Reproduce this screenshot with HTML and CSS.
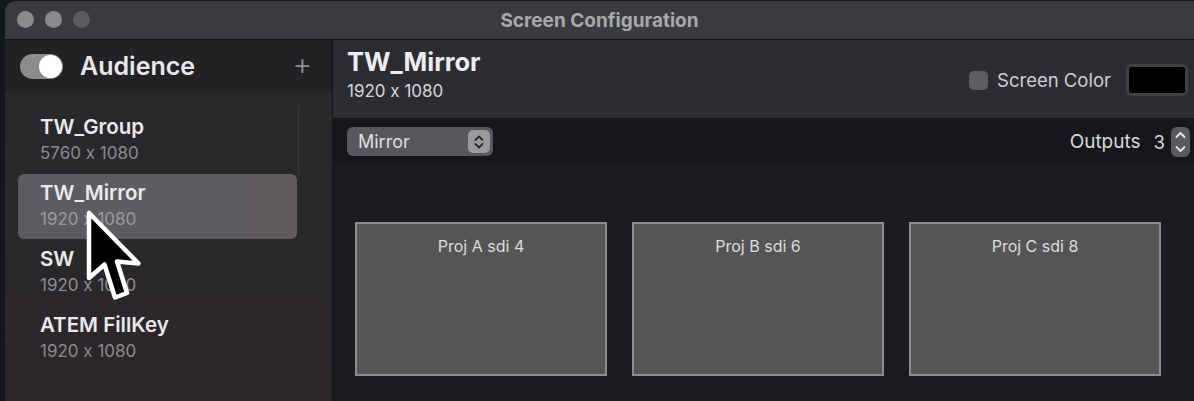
FILE: index.html
```html
<!DOCTYPE html>
<html>
<head>
<meta charset="utf-8">
<link rel="stylesheet" href="styles.css">
</head>
<body>
<div class="window">
  <div class="titlebar">
    <div class="lights">
      <span class="light"></span><span class="light"></span><span class="light dim"></span>
    </div>
    <div class="title">Screen Configuration</div>
  </div>
  <div class="body">
    <aside class="sidebar">
      <div class="side-head">
        <div class="toggle"><span class="knob"></span></div>
        <div class="aud">Audience</div>
        <div class="plus">+</div>
      </div>
      <div class="list">
        <div class="item"><div class="name">TW_Group</div><div class="res">5760 x 1080</div></div>
        <div class="item sel"><div class="name">TW_Mirror</div><div class="res">1920 x 1080</div></div>
        <div class="item"><div class="name">SW</div><div class="res">1920 x 1080</div></div>
        <div class="item"><div class="name">ATEM FillKey</div><div class="res">1920 x 1080</div></div>
      </div>
      <div class="scrollline"></div>
    </aside>
    <main class="main">
      <div class="main-head">
        <div class="heading">
          <div class="h-title">TW_Mirror</div>
          <div class="h-sub">1920 x 1080</div>
        </div>
        <div class="screen-color">
          <span class="check"></span>
          <span class="sc-label">Screen Color</span>
          <span class="well"><span class="well-in"></span></span>
        </div>
      </div>
      <div class="toolbar">
        <div class="popup">
          <span class="popup-label">Mirror</span>
          <span class="popup-arrows">
            <svg width="14" height="18" viewBox="0 0 14 18"><path d="M3.5 7 L7 3.5 L10.5 7 M3.5 11 L7 14.5 L10.5 11" fill="none" stroke="#2a2a2c" stroke-width="1.8" stroke-linecap="round" stroke-linejoin="round"/></svg>
          </span>
        </div>
        <div class="outputs">
          <span class="out-label">Outputs</span>
          <span class="out-num">3</span>
          <span class="stepper">
            <svg width="19" height="30" viewBox="0 0 19 30"><path d="M5.5 10 L9.5 6 L13.5 10 M5.5 20 L9.5 24 L13.5 20" fill="none" stroke="#e6e6e6" stroke-width="1.8" stroke-linecap="round" stroke-linejoin="round"/></svg>
          </span>
        </div>
      </div>
      <div class="canvas">
        <div class="proj">Proj A sdi 4</div>
        <div class="proj">Proj B sdi 6</div>
        <div class="proj">Proj C sdi 8</div>
      </div>
    </main>
  </div>
</div>
<svg class="cursor" width="62" height="96" viewBox="-1 -1 12.4 19.2">
  <path d="M0 0 L0 13 L3.1 10.3 L5.2 16.9 L7.6 16 L5.6 9.7 L9.9 10.1 Z" fill="#000" stroke="#fff" stroke-width="0.9" stroke-linejoin="round"/>
</svg>
</body>
</html>
```

FILE: styles.css
```css
html, body {
  margin: 0;
  padding: 0;
}
body {
  width: 1194px;
  height: 401px;
  overflow: hidden;
  background: #14171c;
  font-family: "Inter", "Noto Sans", "Liberation Sans", sans-serif;
  font-feature-settings: "calt" 0;
  position: relative;
}
.window {
  margin-left: 5px;
  margin-top: 1px;
  height: 400px;
  border-top-left-radius: 10px;
  overflow: hidden;
  display: flex;
  flex-direction: column;
  background: #1c1d22;
}
.titlebar {
  height: 38px;
  flex: none;
  background: #3a3b3e;
  border-bottom: 1px solid #141416;
  position: relative;
  display: flex;
  align-items: center;
  justify-content: center;
}
.lights {
  position: absolute;
  left: 12px;
  top: 10px;
  display: flex;
  gap: 11px;
}
.light {
  width: 17px;
  height: 17px;
  border-radius: 50%;
  background: #8a8a8d;
}
.light.dim {
  background: #5c5c5f;
}
.title {
  color: #a9a9ab;
  font-weight: 700;
  font-size: 19px;
  margin-left: 0;
}
.body {
  flex: 1;
  display: flex;
  min-height: 0;
}
.sidebar {
  width: 327px;
  flex: none;
  border-right: 1px solid #151518;
  background: linear-gradient(180deg, #28282b 0%, #29282b 50%, #2d2629 100%);
  position: relative;
}
.side-head {
  height: 52px;
  background: #222225;
  display: flex;
  align-items: center;
  padding-left: 15px;
  padding-right: 20px;
}
.toggle {
  width: 43px;
  height: 25px;
  border-radius: 13px;
  background: #8c8c8e;
  position: relative;
  flex: none;
}
.knob {
  position: absolute;
  right: 1px;
  top: 1px;
  width: 23px;
  height: 23px;
  border-radius: 50%;
  background: #ffffff;
}
.aud {
  color: #e8e8ea;
  font-size: 25px;
  font-weight: 600;
  margin-left: 17px;
  flex: 1;
}
.plus {
  color: #8f8f92;
  font-size: 30px;
  font-weight: 300;
  line-height: 1;
  margin-top: -4px;
}
.list {
  padding-top: 16px;
  display: flex;
  flex-direction: column;
  gap: 1px;
}
.item {
  margin-left: 13px;
  width: 279px;
  height: 65px;
  box-sizing: border-box;
  padding: 7px 0 0 22px;
  border-radius: 6px;
}
.item.sel {
  background: linear-gradient(90deg, #5b5c61 0%, #5d5c61 70%, #615a5e 100%);
}
.name {
  color: #e9e9eb;
  font-size: 20.5px;
  font-weight: 600;
  line-height: 24px;
}
.res {
  color: #8b8b8e;
  font-size: 17px;
  line-height: 24px;
  margin-top: 2px;
}
.item.sel .res {
  color: #9a9a9e;
}
.scrollline {
  position: absolute;
  left: 293px;
  top: 66px;
  width: 1px;
  height: 68px;
  background: #38383b;
}
.main {
  flex: 1;
  display: flex;
  flex-direction: column;
  min-width: 0;
}
.main-head {
  height: 78px;
  flex: none;
  background: #2c2d33;
  display: flex;
  justify-content: space-between;
  padding: 0 6px 0 14px;
}
.heading {
  padding-top: 6px;
}
.h-title {
  color: #ededef;
  font-size: 25.5px;
  font-weight: 700;
  line-height: 32px;
}
.h-sub {
  color: #d6d6d8;
  font-size: 17px;
  line-height: 22px;
  margin-top: 2px;
}
.screen-color {
  display: flex;
  align-items: center;
  padding-top: 2px;
}
.check {
  width: 19px;
  height: 19px;
  border-radius: 5px;
  background: #5e5e62;
  margin-right: 9px;
}
.sc-label {
  color: #cfcfd1;
  font-size: 18.5px;
  margin-right: 15px;
}
.well {
  width: 62px;
  height: 32px;
  box-sizing: border-box;
  border-radius: 6px;
  background: #414245;
  padding: 3px;
  display: flex;
}
.well-in {
  flex: 1;
  background: #000;
  border-radius: 2px;
}
.toolbar {
  height: 45px;
  flex: none;
  background: #16171b;
  display: flex;
  align-items: center;
  justify-content: space-between;
  padding: 0 4px 0 14px;
  border-top: 1px solid #141418;
}
.popup {
  width: 146px;
  height: 29px;
  box-sizing: border-box;
  border-radius: 6px;
  background: #58585c;
  display: flex;
  align-items: center;
  justify-content: space-between;
  padding: 0 3px 0 11px;
}
.popup-label {
  color: #dfdfe1;
  font-size: 18px;
}
.popup-arrows {
  width: 22px;
  height: 23px;
  border-radius: 5px;
  background: #9a9a9d;
  display: flex;
  align-items: center;
  justify-content: center;
}
.outputs {
  display: flex;
  align-items: center;
}
.out-label {
  color: #d8d8da;
  font-size: 19px;
  margin-right: 13px;
}
.out-num {
  color: #d8d8da;
  font-size: 18.5px;
  margin-right: 6px;
}
.stepper {
  width: 19px;
  height: 30px;
  border-radius: 6px;
  background: #5a5a5e;
  display: flex;
}
.canvas {
  flex: 1;
  background: #1b1c21;
  display: flex;
  gap: 25px;
  padding: 58px 0 0 22px;
}
.proj {
  width: 252px;
  height: 154px;
  box-sizing: border-box;
  border: 2px solid #8d8d8f;
  background: #555556;
  color: #dcdcde;
  font-size: 16px;
  text-align: center;
  padding-top: 12px;
}
.cursor {
  position: absolute;
  left: 84px;
  top: 208px;
}
```
